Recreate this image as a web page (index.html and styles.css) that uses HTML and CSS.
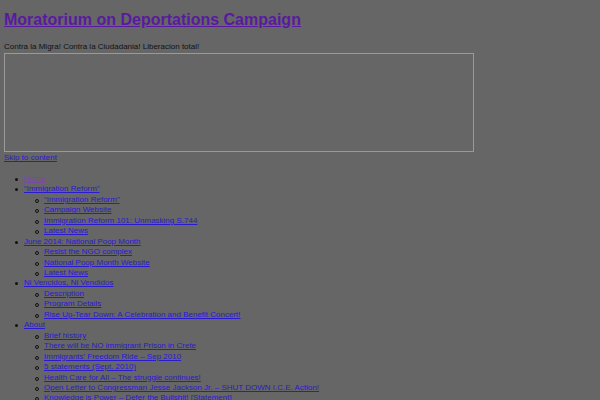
FILE: index.html
```html
<!DOCTYPE html>
<html>
<head>
<meta charset="utf-8">
<link rel="stylesheet" href="styles.css">
</head>
<body>
<h1 class="site-title"><a href="#">Moratorium on Deportations Campaign</a></h1>
<p class="tagline">Contra la Migra! Contra la Ciudadania! Liberacion total!</p>
<div class="frame"></div>
<a class="skip" href="#">Skip to content</a>
<ul class="menu">
  <li><a class="current" href="#">Home</a></li>
  <li><a href="#">“Immigration Reform”</a>
    <ul>
      <li><a href="#">“Immigration Reform”</a></li>
      <li><a href="#">Campaign Website</a></li>
      <li><a href="#">Immigration Reform 101: Unmasking S.744</a></li>
      <li><a href="#">Latest News</a></li>
    </ul>
  </li>
  <li><a href="#">June 2014: National Poop Month</a>
    <ul>
      <li><a href="#">Resist the NGO complex</a></li>
      <li><a href="#">National Poop Month Website</a></li>
      <li><a href="#">Latest News</a></li>
    </ul>
  </li>
  <li><a href="#">Ni Vencidos, Ni Vendidos</a>
    <ul>
      <li><a href="#">Description</a></li>
      <li><a href="#">Program Details</a></li>
      <li><a href="#">Rise Up-Tear Down: A Celebration and Benefit Concert!</a></li>
    </ul>
  </li>
  <li><a href="#">About</a>
    <ul>
      <li><a href="#">Brief history</a></li>
      <li><a href="#">There will be NO immigrant Prison in Crete</a></li>
      <li><a href="#">Immigrants’ Freedom Ride – Sep 2010</a></li>
      <li><a href="#">5 statements (Sept. 2010)</a></li>
      <li><a href="#">Health Care for All – The struggle continues!</a></li>
      <li><a href="#">Open Letter to Congressman Jesse Jackson Jr. – SHUT DOWN I.C.E. Action!</a></li>
      <li><a href="#">Knowledge is Power – Defer the Bullshit! [Statement]</a></li>
    </ul>
  </li>
</ul>
</body>
</html>
```
FILE: styles.css
```css
html { background: #666666; }
body {
  margin: 0;
  padding: 4px;
  font-family: "Liberation Sans", Arial, sans-serif;
  font-size: 8px;
  line-height: 10.45px;
  color: #111111;
  background: #666666;
}
a { color: #2a1ad0; }
.site-title {
  margin: 6px 0 0 0;
  font-size: 16px;
  line-height: 20px;
  font-weight: bold;
}
.site-title a { color: #5a1aa0; }
.tagline { margin: 12px 0 0 0; }
.frame {
  width: 468px;
  height: 97px;
  border: 1px solid #9a9a9a;
  margin-top: 1px;
}
.skip { display: inline-block; margin-top: 1px; }
.menu {
  margin: 10px 0 0 0;
  padding-left: 20px;
  list-style: none;
}
.menu li { position: relative; }
.menu > li::before {
  content: "";
  position: absolute;
  left: -9px;
  top: 4px;
  width: 3px;
  height: 3px;
  border-radius: 50%;
  background: #111111;
}
.menu ul {
  margin: 0;
  padding-left: 20px;
  list-style: none;
}
.menu ul li::before {
  content: "";
  position: absolute;
  left: -9px;
  top: 4px;
  width: 2px;
  height: 2px;
  border-radius: 50%;
  border: 1px solid #111111;
  background: transparent;
}
.menu a.current { color: #7a4aa0; }
```
